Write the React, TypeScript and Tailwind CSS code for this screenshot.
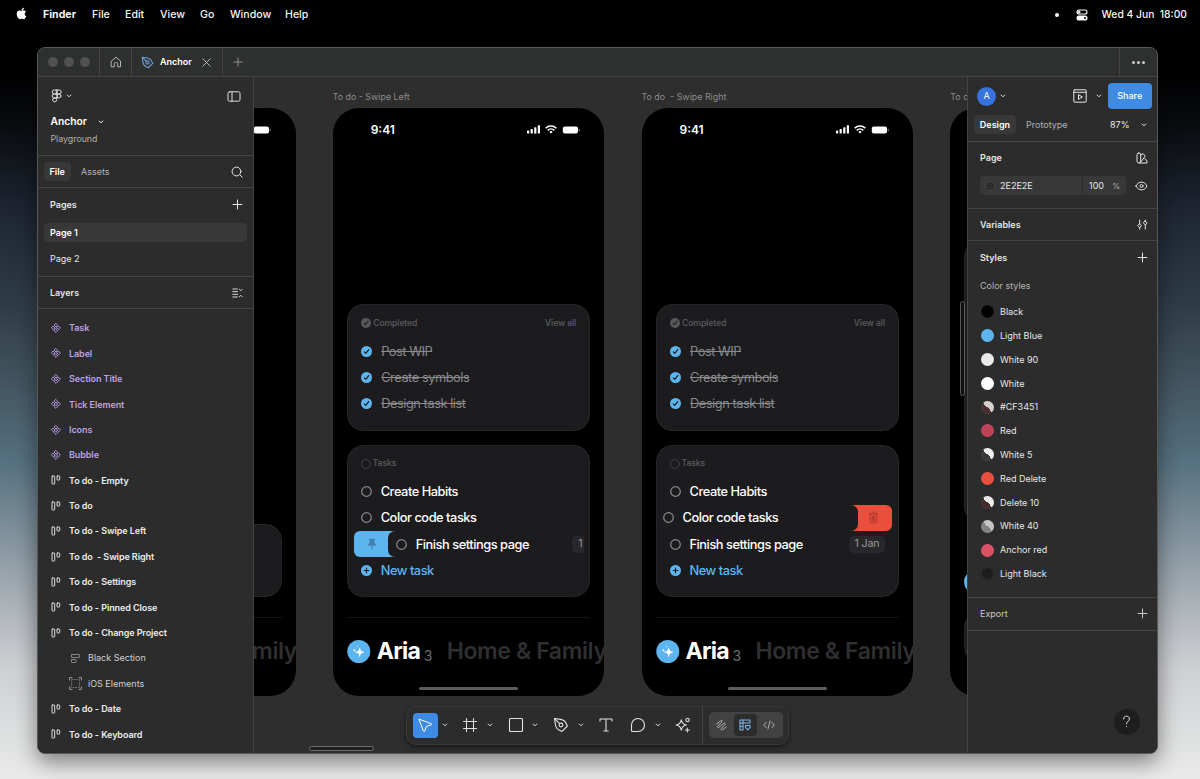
import { ReactNode } from "react"
import { FaApple } from "react-icons/fa"

type IconProps = {
    w?: number
    h?: number
    sw?: number
    className?: string
    children: ReactNode
}

const Icon = ({ w = 16, h = w, sw = 1, className = "", children }: IconProps) => (
    <svg
        width={w}
        height={h}
        viewBox={`0 0 ${w} ${h}`}
        fill="none"
        stroke="currentColor"
        strokeWidth={sw}
        strokeLinecap="round"
        strokeLinejoin="round"
        className={`shrink-0 ${className}`}
    >
        {children}
    </svg>
)

const Chevron = ({ className = "" }: { className?: string }) => (
    <Icon w={6} h={4} className={className}>
        <path d="M1.2 1 3 2.8 4.8 1" />
    </Icon>
)

const Plus = ({ className = "" }: { className?: string }) => (
    <Icon w={11} className={className}>
        <path d="M5.5 1v9M1 5.5h9" />
    </Icon>
)

const PenIcon = ({ className = "" }: { className?: string }) => (
    <Icon w={16} sw={1.1} className={className}>
        <path d="M1.500 1.500 7.500 2.400c3 .5 5.200 2 5.900 4.600l1 2-5.400 5.400-2-1C4.400 12.700 2.900 10.500 2.400 7.500z" />
        <path d="M1.500 1.500 6.600 6.600" />
        <circle cx="8" cy="8" r="1.900" />
    </Icon>
)

const ComponentIcon = () => (
    <Icon w={10} className="text-[#b294dd]">
        <path d="M5 .6 6.700 2.300 5 4 3.300 2.300zM5 6 6.700 7.700 5 9.400 3.300 7.700zM2.300 3.300 4 5 2.300 6.700.6 5zM7.700 3.300 9.400 5 7.700 6.700 6 5z" />
    </Icon>
)

const ColumnsIcon = () => (
    <Icon w={10} className="text-[#dcdcdc]">
        <rect x="1" y="1" width="2.700" height="8" rx=".5" />
        <rect x="6" y="1" width="2.700" height="4" rx=".5" />
    </Icon>
)

const layers = [
    { name: "Task", kind: "component" },
    { name: "Label", kind: "component" },
    { name: "Section Title", kind: "component" },
    { name: "Tick Element", kind: "component" },
    { name: "Icons", kind: "component" },
    { name: "Bubble", kind: "component" },
    { name: "To do - Empty", kind: "frame" },
    { name: "To do", kind: "frame" },
    { name: "To do - Swipe Left", kind: "frame" },
    { name: "To do  - Swipe Right", kind: "frame" },
    { name: "To do - Settings", kind: "frame" },
    { name: "To do - Pinned Close", kind: "frame" },
    { name: "To do - Change Project", kind: "frame" },
    { name: "Black Section", kind: "stack" },
    { name: "iOS Elements", kind: "group" },
    { name: "To do - Date", kind: "frame" },
    { name: "To do - Keyboard", kind: "frame" },
]

const styles = [
    { name: "Black", fill: "#000000" },
    { name: "Light Blue", fill: "#5db5f0" },
    { name: "White 90", fill: "#e9e9e9" },
    { name: "White", fill: "#ffffff" },
    { name: "#CF3451", fill: "linear-gradient(45deg, #4a2f34 50%, #d8cfcf 50%)" },
    { name: "Red", fill: "#bf4156" },
    { name: "White 5", fill: "linear-gradient(45deg, #383838 50%, #f0f0f0 50%)" },
    { name: "Red Delete", fill: "#ea4e3d" },
    { name: "Delete 10", fill: "linear-gradient(45deg, #432d2b 50%, #ececec 50%)" },
    { name: "White 40", fill: "linear-gradient(45deg, #828282 50%, #c4c4c4 50%)" },
    { name: "Anchor red", fill: "#dd4f66" },
    { name: "Light Black", fill: "#1e1e1e" },
]

function MenuBar() {
    return (
        <header className="flex h-[47px] items-start pl-[15px] pr-[13px] text-[10.6px] leading-[29px] font-medium text-[#f4f4f4]">
            <FaApple className="mt-[7px] size-[13px] shrink-0 text-white" />
            <nav className="flex grow pl-[15px] whitespace-nowrap">
                <span className="w-[49px] font-bold">Finder</span>
                <span className="w-[33px]">File</span>
                <span className="w-[35px]">Edit</span>
                <span className="w-[40px]">View</span>
                <span className="w-[30px]">Go</span>
                <span className="w-[55px]">Window</span>
                <span>Help</span>
            </nav>
            <span className="mt-[13px] mr-[17px] size-[3.500px] rounded-full bg-white" />
            <Icon w={12} sw={1.1} className="mt-[8.500px] mr-[14px] text-white">
                <rect x="1" y="1" width="10" height="4" rx="2" />
                <circle cx="3" cy="3" r="1" />
                <rect x="1" y="7" width="10" height="4" rx="2" fill="currentColor" />
                <circle cx="9" cy="9" r="1" fill="#000" stroke="none" />
            </Icon>
            <span className="text-[10.300px] whitespace-pre">Wed 4 Jun  18:00</span>
        </header>
    )
}

function TabBar() {
    return (
        <div className="flex h-[29px] shrink-0 border-b border-[#444] bg-[#2e2f2f] text-[#b5b5b5]">
            <div className="flex w-[62px] items-center gap-[6px] border-r border-[#444] pl-[9.500px]">
                <i className="size-[10px] rounded-full bg-[#515151]" />
                <i className="size-[10px] rounded-full bg-[#515151]" />
                <i className="size-[10px] rounded-full bg-[#515151]" />
            </div>
            <div className="flex w-[32px] items-center justify-center border-r border-[#444]">
                <Icon w={12}>
                    <path d="M1.500 5 6 1.200 10.500 5v5.800H7.700V7.600c0-.6-.4-1-1-1H5.300c-.6 0-1 .4-1 1v3.200H1.500z" />
                </Icon>
            </div>
            <div className="flex w-[91px] items-center border-r border-[#444] pl-[9px]">
                <svg width="13" height="13" viewBox="0 0 16 16" fill="none" stroke="#6fa3dc" strokeWidth="1.300" strokeLinejoin="round">
                    <path d="M1.500 1.500 7.500 2.400c3 .5 5.200 2 5.900 4.600l1 2-5.400 5.400-2-1C4.400 12.700 2.900 10.500 2.400 7.500z" />
                    <path d="M1.500 1.500 6.600 6.600" />
                    <circle cx="8" cy="8" r="2" />
                </svg>
                <span className="ml-[6px] w-[42px] text-[9px] font-semibold text-white">Anchor</span>
                <Icon w={9}>
                    <path d="m.8.8 7.400 7.400M8.200.8.8 8.200" />
                </Icon>
            </div>
            <div className="flex grow items-center pl-[10px] text-[#8e8e8e]">
                <Icon w={10}>
                    <path d="M5 1v8M1 5h8" />
                </Icon>
            </div>
            <div className="flex w-[38px] items-center justify-center gap-[2px] border-l border-[#444]">
                <i className="size-[3px] rounded-full bg-[#c8c8c8]" />
                <i className="size-[3px] rounded-full bg-[#c8c8c8]" />
                <i className="size-[3px] rounded-full bg-[#c8c8c8]" />
            </div>
        </div>
    )
}

function LeftPanel() {
    return (
        <aside className="flex w-[216px] shrink-0 flex-col border-r border-[#444] bg-[#2c2c2c] text-[9px] text-[#e6e6e6]">
            <div className="h-[79px] shrink-0 border-b border-[#444] pr-[12px] pl-[12.500px]">
                <div className="flex h-[38px] items-center">
                    <Icon w={12} h={14} className="text-[#e0e0e0]">
                        <path d="M5.700 1H3.200a2 2 0 0 0 0 4h2.500zM5.700 1h2.500a2 2 0 0 1 0 4H5.700zM5.700 5H3.200a2 2 0 0 0 0 4h2.500zM5.700 9H3.200a2 2 0 1 0 2.500 2z" />
                        <circle cx="7.900" cy="7" r="2" />
                    </Icon>
                    <Chevron className="ml-[3px]" />
                    <Icon w={14} h={11} className="ml-auto text-[#e0e0e0]">
                        <rect x="1" y=".8" width="12" height="9.400" rx="1.500" />
                        <path d="M5 1v9" />
                    </Icon>
                </div>
                <div className="flex h-[14px] items-center text-[10.300px] font-semibold text-white">
                    Anchor
                    <Chevron className="ml-[11px]" />
                </div>
                <div className="mt-[2px] text-[8.800px] leading-[15px] text-[#b0b0b0]">Playground</div>
            </div>
            <div className="flex h-[32px] shrink-0 items-center border-b border-[#444] pr-[10px] pl-[5.500px]">
                <span className="flex h-[19px] w-[27.500px] items-center justify-center rounded-[4px] bg-[#383838] font-semibold text-white">File</span>
                <span className="ml-[10px] text-[#b3b3b3]">Assets</span>
                <Icon w={12} className="ml-auto">
                    <circle cx="5.500" cy="5.500" r="4.400" />
                    <path d="m8.800 8.800 2.400 2.400" />
                </Icon>
            </div>
            <div className="h-[89px] shrink-0 border-b border-[#444] px-[6px]">
                <div className="flex h-[35px] items-center justify-between pr-[4px] pb-[2px] pl-[6px] font-semibold">
                    Pages <Plus />
                </div>
                <div className="flex h-[19px] items-center rounded-[4px] bg-[#383838] pl-[6px] font-semibold text-white">Page 1</div>
                <div className="mt-[7px] flex h-[19px] items-center pl-[6px]">Page 2</div>
            </div>
            <div className="flex h-[32px] shrink-0 items-center justify-between border-b border-[#444] pr-[10px] pl-[12px] font-semibold">
                Layers
                <Icon w={11} h={10} sw={0.9}>
                    <path d="M.8 1h4.700M.8 3.600h4.700M.8 6.300h4.700M.8 9h4.700M7.300 1.200 8.800 2.700l1.500-1.500M7.300 8.800l1.500-1.500 1.500 1.500" />
                </Icon>
            </div>
            <ul className="pt-[6.400px]">
                {layers.map((layer) => {
                    if (layer.kind === "component") {
                        return (
                            <li key={layer.name} className="flex h-[25.400px] items-center gap-[8px] pl-[13px] font-semibold tracking-[-0.080px] text-[#bda2e2]">
                                <ComponentIcon />
                                {layer.name}
                            </li>
                        )
                    }
                    if (layer.kind === "frame") {
                        return (
                            <li key={layer.name} className="flex h-[25.400px] items-center gap-[8px] pl-[13px] font-semibold tracking-[-0.080px] whitespace-pre text-[#ececec]">
                                <ColumnsIcon />
                                {layer.name}
                            </li>
                        )
                    }
                    return (
                        <li key={layer.name} className="flex h-[25.400px] items-center gap-[6px] pl-[31px] text-[#d0d0d0]">
                            {layer.kind === "stack" ? (
                                <Icon w={13} sw={0.9} className="text-[#8f8f8f]">
                                    <rect x="2.500" y="2.500" width="8" height="3" rx=".5" />
                                    <rect x="2.500" y="7.500" width="4.500" height="3" rx=".5" />
                                </Icon>
                            ) : (
                                <Icon w={13} sw={0.9} className="text-[#a8a8a8]">
                                    <path d="M.6 3V.6H3M10 .6h2.400V3M12.400 10v2.400H10M3 12.400H.6V10" />
                                    <rect x="2.500" y="2.500" width="8" height="8" strokeDasharray="1 1.700" stroke="#777" />
                                </Icon>
                            )}
                            {layer.name}
                        </li>
                    )
                })}
            </ul>
        </aside>
    )
}

const Battery = () => (
    <svg width="18" height="8" viewBox="0 0 18 8">
        <rect x=".8" y=".6" width="15.200" height="6.800" rx="2" fill="#fff" />
        <rect x="16.700" y="2.700" width="1" height="2.600" rx=".5" fill="#777" />
    </svg>
)

function StatusBar() {
    return (
        <div className="flex h-[44px] items-center pr-[24.500px] pl-[38px]">
            <span className="grow text-[12px] font-semibold tracking-normal">9:41</span>
            <svg width="14" height="9" viewBox="0 0 14 9" fill="#fff">
                <rect x="0" y="5.500" width="2.200" height="3" rx=".6" />
                <rect x="3.600" y="4" width="2.200" height="4.500" rx=".6" />
                <rect x="7.200" y="2.200" width="2.200" height="6.300" rx=".6" />
                <rect x="10.800" y=".2" width="2.200" height="8.300" rx=".6" />
            </svg>
            <svg width="12" height="9" viewBox="0 0 12 9" fill="none" stroke="#fff" strokeWidth="1.600" className="mr-[5px] ml-[4px]">
                <path d="M.6 3.200a7.700 7.700 0 0 1 10.800 0M2.700 5.400a4.700 4.700 0 0 1 6.600 0" />
                <path d="M6 8.600 4.300 6.900a2.500 2.500 0 0 1 3.400 0z" fill="#fff" stroke="none" />
            </svg>
            <Battery />
        </div>
    )
}

const Circle = () => (
    <svg width="11" height="11" viewBox="0 0 11 11" className="shrink-0">
        <circle cx="5.500" cy="5.500" r="4.800" fill="none" stroke="#8b8b8d" strokeWidth="1.200" />
    </svg>
)

const Tick = ({ muted }: { muted?: boolean }) => (
    <svg width={muted ? 10 : 11} height={muted ? 10 : 11} viewBox="0 0 11 11" className="shrink-0">
        <circle cx="5.500" cy="5.500" r="5.500" fill={muted ? "#58585a" : "#5db5f0"} />
        <path d="m3.300 5.900 1.500 1.500 2.900-3.800" fill="none" stroke="#1c1c1e" strokeWidth="1.200" strokeLinecap="round" strokeLinejoin="round" />
    </svg>
)

const Task = ({ name, children }: { name: string; children?: ReactNode }) => (
    <div className="flex h-[26.300px] items-center gap-[9px] pr-[14px] pl-[14px]">
        <Circle />
        <span>{name}</span>
        {children}
    </div>
)

const DatePill = ({ text, className = "" }: { text: string; className?: string }) => (
    <span className={`flex h-[17px] shrink-0 items-center rounded-[5px] bg-[#28282a] text-[10.600px] font-normal tracking-[-0.100px] text-[#98989a] ${className}`}>{text}</span>
)

function Switcher() {
    return (
        <div className="mx-[14px] mt-[20px] flex h-[67px] w-[257px] shrink-0 items-center whitespace-nowrap">
            <svg width="24" height="24" viewBox="0 0 24 24" className="shrink-0">
                <circle cx="11.800" cy="11.500" r="11.500" fill="#5db5f0" />
                <path d="M12.700 7.800c.5 3 1.300 3.800 4.300 4.400-3 .6-3.800 1.400-4.300 4.400-.5-3-1.300-3.800-4.300-4.400 3-.6 3.800-1.400 4.300-4.400z" fill="#fff" stroke="#fff" strokeWidth=".5" />
                <path d="M7.300 8.500c.2 1.200.5 1.600 1.700 1.800-1.200.2-1.500.6-1.700 1.800-.2-1.200-.5-1.600-1.700-1.800 1.200-.2 1.500-.6 1.700-1.800zM10.500 5.600c.1.700.3.900 1 1-.7.100-.9.300-1 1-.1-.7-.3-.9-1-1 .7-.1.900-.3 1-1z" fill="#fff" />
            </svg>
            <span className="ml-[6px] w-[47px] shrink-0 text-[23px] font-bold tracking-[-0.700px] text-white">Aria</span>
            <span className="mt-[7px] w-[23px] shrink-0 text-[14px] font-normal text-[#6c6c6e]">3</span>
            <span className="shrink-0 text-[23px] font-semibold tracking-[-0.400px] text-[#2f2f30]">Home &amp; Family</span>
        </div>
    )
}

function Phone({ swipe }: { swipe: "left" | "right" }) {
    return (
        <div className="flex h-[588.500px] w-[271.500px] flex-col overflow-hidden rounded-[26px] bg-black text-[12.800px] font-medium tracking-[-0.450px] text-white">
            <StatusBar />
            <div className="mx-[14px] mt-[152.500px] h-[126.500px] shrink-0 rounded-[16px] border border-[#262628] bg-[#1c1c1e]">
                <div className="flex h-[33px] items-center pt-[3px] pr-[13px] pl-[13.500px] text-[8.600px] tracking-[-0.080px] text-[#5d5d5f]">
                    <Tick muted />
                    <span className="ml-[2px] grow">Completed</span>
                    <span>View all</span>
                </div>
                {["Post WIP", "Create symbols", "Design task list"].map((name) => (
                    <div key={name} className="flex h-[26.300px] items-center gap-[9px] pl-[13.500px] font-normal text-[#8a8a8c]">
                        <Tick />
                        <span className="line-through">{name}</span>
                    </div>
                ))}
            </div>
            <div className="mx-[14px] mt-[14px] h-[152.500px] shrink-0 rounded-[16px] border border-[#262628] bg-[#1c1c1e] *:-mx-px">
                <div className="flex h-[33px] items-center gap-[2px] pt-[3px] pl-[14px] text-[8.600px] tracking-[-0.080px] text-[#5d5d5f]">
                    <i className="size-[10px] rounded-full border border-[#434345]" />
                    Tasks
                </div>
                <Task name="Create Habits" />
                {swipe === "left" ? (
                    <>
                        <Task name="Color code tasks" />
                        {/* row pulled right, pin action shows underneath */}
                        <div className="flex h-[26.300px] pr-[6px] pl-[7px]">
                            <div className="flex w-[42px] shrink-0 items-center rounded-l-[6px] bg-[#5db5f0] pl-[13px]">
                                <svg width="10" height="13" viewBox="0 0 10 13" fill="#3f7fae">
                                    <path d="M2 .8h6v1H7.300l.3 3.400c1 .5 1.600 1.200 1.700 2.400H5.500v3L5 12.300l-.5-1.700v-3H.7C.8 6.400 1.400 5.700 2.400 5.200l.3-3.400H2z" />
                                </svg>
                            </div>
                            <div className="-ml-[8px] flex grow items-center gap-[9px] overflow-hidden rounded-l-[7px] bg-[#1c1c1e] pl-[8px]">
                                <Circle />
                                <span className="whitespace-nowrap">Finish settings page</span>
                                <DatePill text="1" className="ml-auto w-[12px] rounded-r-none pl-[6px]" />
                            </div>
                        </div>
                    </>
                ) : (
                    <>
                        {/* row pulled left, delete action shows underneath */}
                        <div className="flex h-[26.300px] pr-[7px] pl-[7px]">
                            <div className="z-10 flex grow items-center gap-[9px] rounded-r-[7px] bg-[#1c1c1e]">
                                <Circle />
                                <span>Color code tasks</span>
                            </div>
                            <div className="-ml-[8px] flex w-[42px] items-center justify-end rounded-r-[6px] bg-[#ea4e3d] pr-[13px] text-[#b23a2e]">
                                <Icon w={11} h={13}>
                                    <path d="M1 3h9M3.800 3V1.200h3.400V3M2 3l.5 8.800h6L9 3M4.300 5v5M5.500 5v5M6.700 5v5" />
                                </Icon>
                            </div>
                        </div>
                        <Task name="Finish settings page">
                            <DatePill text="1 Jan" className="ml-auto w-[36px] justify-center" />
                        </Task>
                    </>
                )}
                <div className="flex h-[26.300px] items-center gap-[9px] pl-[14px] text-[#5db5f0]">
                    <svg width="11" height="11" viewBox="0 0 11 11">
                        <circle cx="5.500" cy="5.500" r="5.500" fill="#5db5f0" />
                        <path d="M5.500 3.200v4.600M3.200 5.500h4.600" stroke="#1c1c1e" strokeWidth="1.200" strokeLinecap="round" />
                    </svg>
                    New task
                </div>
            </div>
            <div className="mx-[14px] mt-[20px] h-px shrink-0 bg-[#151515]" />
            <div className="-mt-[20px]">
                <Switcher />
            </div>
            <div className="mx-auto mt-[1.500px] h-[3.500px] w-[99.500px] shrink-0 rounded-full bg-[#5e5e5e]" />
        </div>
    )
}

// only the right edge of this artboard is on screen
function EmptyPhone() {
    return (
        <div className="flex h-[588.500px] w-[271.500px] flex-col overflow-hidden rounded-[26px] bg-black">
            <div className="flex h-[44px] items-center justify-end pr-[24.500px]">
                <Battery />
            </div>
            <div className="mx-[14px] mt-[372px] h-[73.500px] shrink-0 rounded-[16px] border border-[#262628] bg-[#1c1c1e]" />
            <div className="mx-[14px] mt-[20px] h-px shrink-0 bg-[#151515]" />
            <div className="-mr-[1.500px] flex h-[67px] items-center justify-end text-[23px] font-semibold tracking-[-0.400px] text-[#2f2f30]">Family</div>
        </div>
    )
}

function SettingsPhone() {
    return (
        <div className="flex h-[588.500px] w-[271.500px] flex-col rounded-[26px] bg-black pt-[132px] pl-[14px]">
            <div className="h-[283px] shrink-0 rounded-[16px] border border-[#262628] bg-[#1c1c1e]" />
            <div className="mt-[47px] size-[24px] shrink-0 rounded-full bg-[#5db5f0]" />
            <div className="mt-[17px] h-[52px] shrink-0 rounded-[16px] border border-[#262628] bg-[#1c1c1e]" />
        </div>
    )
}

function Artboards() {
    const label = "mb-[4px] block h-[14px] text-[8.900px] leading-[14px] whitespace-pre text-[#8c8c8c]"
    return (
        <>
            <div className="absolute top-[12.500px] left-[-230px]">
                <span className={label} />
                <EmptyPhone />
            </div>
            <div className="absolute top-[12.500px] left-[78.700px]">
                <span className={label}>To do - Swipe Left</span>
                <Phone swipe="left" />
            </div>
            <div className="absolute top-[12.500px] left-[387.500px]">
                <span className={label}>To do  - Swipe Right</span>
                <Phone swipe="right" />
            </div>
            <div className="absolute top-[12.500px] left-[696.300px]">
                <span className={label}>To do - Settings</span>
                <SettingsPhone />
            </div>
        </>
    )
}

function Toolbar() {
    return (
        <div className="absolute top-[629px] left-[152px] flex h-[38.500px] w-[383px] items-center rounded-[10px] border border-[#393939] bg-[#2c2c2c] pl-[5.500px] text-[#e2e2e2] shadow-[0_2px_5px_rgba(0,0,0,0.5)]">
            <div className="flex size-[25.500px] items-center justify-center rounded-[4px] bg-[#3f8ae2] text-white">
                <Icon w={16}>
                    <path d="M2.200 2.200 14.300 6.700c.5.200.5.900 0 1.100L9.300 9.400 7.600 14.200c-.2.500-.9.500-1.100 0z" />
                </Icon>
            </div>
            <Chevron className="mx-[4px]" />
            <Icon w={16} className="ml-[10px]">
                <path d="M4.500 1.500v13M11.500 1.500v13M1.500 4.500h13M1.500 11.500h13" />
            </Icon>
            <Chevron className="ml-[9px]" />
            <Icon w={16} sw={1.1} className="ml-[14.500px]">
                <rect x="1.500" y="1.500" width="13" height="13" rx="1" />
            </Icon>
            <Chevron className="ml-[8.500px]" />
            <PenIcon className="ml-[15px]" />
            <Chevron className="ml-[8.500px]" />
            <Icon w={16} sw={1.1} className="ml-[14px]">
                <path d="M2 4V2h12v2M8 2v12M5.800 14h4.400" />
            </Icon>
            <Icon w={16} sw={1.1} className="ml-[16px]">
                <path d="M1.500 8A6.500 6.500 0 1 1 8 14.500H2.500c-.6 0-1-.4-1-1z" />
            </Icon>
            <Chevron className="ml-[9px]" />
            <Icon w={16} sw={1.1} className="ml-[14px]">
                <path d="M6.300 2.800c.6 3.500 1.700 4.600 5.200 5.200-3.500.6-4.600 1.700-5.200 5.200C5.700 9.700 4.600 8.600 1.100 8c3.500-.6 4.600-1.700 5.200-5.200z" />
                <circle cx="12.500" cy="3" r="1.700" />
                <path d="M12.300 11v4M10.300 13h4" />
            </Icon>
            <div className="ml-[11px] h-full w-px bg-[#424242]" />
            <div className="ml-[6px] flex h-[26px] w-[74px] items-center rounded-[5px] bg-[#424242] text-[#b0b0b0]">
                <div className="flex w-[25px] justify-center">
                    <Icon w={13}>
                        <path d="M1.500 5 5.500 1.900C7 .8 7.700 2 6.700 3L2.700 7.200c-.8 1.100.3 1.800 1.300 1L8.500 4.600c1.400-1 2.200.2 1.200 1.300L6.300 9.500c-.8 1.100.4 1.900 1.400 1.100L11.200 8" />
                    </Icon>
                </div>
                <div className="flex h-[22px] w-[23px] items-center justify-center rounded-[4px] bg-[#2c2c2c] text-[#82b4ec]">
                    <Icon w={12} sw={1.1}>
                        <path d="M1 1h10v3H1zM4 1v10H1V1M1 7.500h3" />
                        <path d="M6.500 6.500h4.500v1.800L8.800 11 6.500 8.300z" />
                    </Icon>
                </div>
                <div className="flex w-[25px] justify-center">
                    <Icon w={12} h={10}>
                        <path d="M3.200 2.300.8 5l2.400 2.700M8.800 2.300 11.200 5 8.800 7.700M7 1 5 9" />
                    </Icon>
                </div>
            </div>
        </div>
    )
}

function RightPanel() {
    return (
        <aside className="flex w-[190px] shrink-0 flex-col border-l border-[#444] bg-[#2c2c2c] text-[9px] text-[#e6e6e6]">
            <div className="h-[65px] shrink-0 border-b border-[#444] pr-[5.500px] pl-[6px]">
                <div className="flex h-[38px] items-center">
                    <span className="ml-[3px] flex size-[19px] items-center justify-center rounded-full bg-[#3672e0] text-[9px] text-white">A</span>
                    <Chevron className="ml-[3.500px]" />
                    <Icon w={14} className="ml-auto">
                        <rect x=".8" y=".8" width="12.400" height="12.400" rx="1" />
                        <path d="M1 3.300h12M5.500 6v4.400L9 8.200z" />
                    </Icon>
                    <Chevron className="mr-[6px] ml-[9.500px]" />
                    <span className="flex h-[26px] w-[43.500px] items-center justify-center rounded-[4px] bg-[#3f8ae2] font-medium text-white">Share</span>
                </div>
                <div className="flex h-[19px] items-center">
                    <span className="flex h-[19px] w-[42px] items-center justify-center rounded-[4px] bg-[#383838] font-semibold text-white">Design</span>
                    <span className="ml-[10px] text-[#b3b3b3]">Prototype</span>
                    <span className="ml-auto">87%</span>
                    <Chevron className="mr-[5px] ml-[11px]" />
                </div>
            </div>
            <div className="h-[67px] shrink-0 border-b border-[#444] pr-[9px] pl-[12px]">
                <div className="flex h-[34px] items-center justify-between pb-[2px] font-semibold">
                    Page
                    <Icon w={12}>
                        <rect x="1" y="1" width="3.700" height="10" rx="1.800" />
                        <path d="M4.700 3 7 1.500l2.300 2.600L4.700 10M9 6.500l2 2.500v2H3.500" />
                    </Icon>
                </div>
                <div className="flex h-[19px] items-center">
                    <div className="flex h-[19px] w-[102px] items-center rounded-l-[4px] bg-[#383838] pl-[5px]">
                        <i className="mr-[5px] size-[10px] rounded-[2px] border border-[#434343] bg-[#2e2e2e]" />
                        2E2E2E
                    </div>
                    <div className="ml-px flex h-[19px] w-[43px] items-center justify-between rounded-r-[4px] bg-[#383838] px-[6px]">
                        100 <span className="text-[8px] text-[#b0b0b0]">%</span>
                    </div>
                    <Icon w={13} h={10} className="ml-auto">
                        <path d="M1 5c1.300-2.600 3.200-3.900 5.500-3.900S10.700 2.400 12 5c-1.300 2.600-3.200 3.900-5.500 3.900S2.300 7.600 1 5z" />
                        <circle cx="6.500" cy="5" r="1.500" />
                    </Icon>
                </div>
            </div>
            <div className="flex h-[32px] shrink-0 items-center justify-between border-b border-[#444] pr-[9.500px] pl-[12px] font-semibold">
                Variables
                <Icon w={11}>
                    <path d="M2.700 1v4M2.700 8.800v1.400M8.300 6v4.200M8.300 1v1.200" />
                    <path d="M2.700 5 4.400 6.900 2.700 8.800 1 6.900zM8.300 2.200 10 4.100 8.300 6 6.600 4.100z" />
                </Icon>
            </div>
            <div className="h-[357px] shrink-0 border-b border-[#444]">
                <div className="flex h-[33px] items-center justify-between pr-[9.500px] pl-[12px] font-semibold">
                    Styles <Plus />
                </div>
                <div className="flex h-[26px] items-center pb-[2px] pl-[12px] text-[#b3b3b3]">Color styles</div>
                {styles.map((style) => (
                    <div key={style.name} className="flex h-[23.820px] items-center pl-[13px]">
                        <i className="mr-[6px] size-[13px] rounded-full inset-ring inset-ring-white/5" style={{ background: style.fill }} />
                        {style.name}
                    </div>
                ))}
            </div>
            <div className="flex h-[32.500px] shrink-0 items-center justify-between border-b border-[#444] pr-[9.500px] pl-[12px] text-[#c8c8c8]">
                Export <Plus />
            </div>
            <div className="flex grow items-end justify-end pr-[17.500px] pb-[18.500px]">
                <span className="flex size-[26px] items-center justify-center rounded-full bg-[#1e1e1e]">
                    <Icon w={9} h={13}>
                        <path d="M1.600 4c0-1.700 1.200-2.800 2.900-2.800s2.900 1.100 2.900 2.700c0 2.400-2.900 2.300-2.900 5M4.500 11.600v.1" />
                    </Icon>
                </span>
            </div>
        </aside>
    )
}

export default function App() {
    return (
        <div className="h-[779px] w-[1200px] overflow-hidden bg-[linear-gradient(180deg,#000_0px,#000_70px,#0b0d11_130px,#1d2430_205px,#2c3844_290px,#42545f_380px,#557080_460px,#7d8f9a_530px,#a9b0b6_600px,#cfd0d3_670px,#e9eae9_779px)] font-[Inter,sans-serif]">
            <MenuBar />
            <main className="ml-[37px] flex h-[707px] w-[1121px] flex-col overflow-hidden rounded-[8px] border border-[#565857] bg-[#2c2c2c] shadow-[0_8px_22px_rgba(0,0,0,0.45)]">
                <TabBar />
                <div className="flex min-h-0 grow">
                    <LeftPanel />
                    <section className="relative grow overflow-hidden bg-[#2e2e2e]">
                        <Artboards />
                        <div className="absolute top-[224px] left-[705.500px] h-[95px] w-[5px] rounded-full border border-[#565656] bg-[#111]" />
                        <div className="absolute top-[669px] left-[55px] h-[5px] w-[65px] rounded-full border border-[#707070] bg-[#1e1e1e]" />
                        <Toolbar />
                    </section>
                    <RightPanel />
                </div>
            </main>
        </div>
    )
}
